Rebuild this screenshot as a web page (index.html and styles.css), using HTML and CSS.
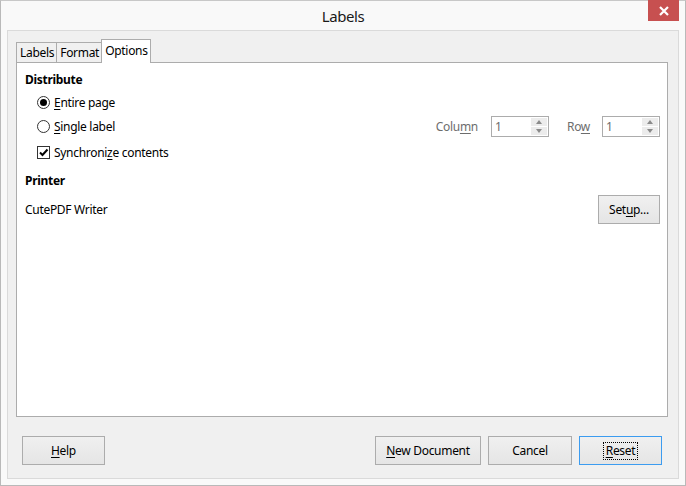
FILE: index.html
```html
<!DOCTYPE html>
<html>
<head>
<meta charset="utf-8">
<link rel="stylesheet" href="styles.css">
</head>
<body>
<div class="window">
  <div class="titlebar">
    <div class="title">Labels</div>
    <div class="close"><svg width="10" height="10" viewBox="0 0 10 10"><path d="M1 1 L9 9 M9 1 L1 9" stroke="#fff" stroke-width="2.2"/></svg></div>
  </div>
  <div class="client">
    <div class="tabs">
      <div class="tab">Labels</div>
      <div class="tab">Format</div>
      <div class="tab active">Options</div>
    </div>
    <div class="panel">
      <div class="row head">Distribute</div>
      <div class="row opt r1">
        <span class="radio checked"></span><span><u>E</u>ntire page</span>
      </div>
      <div class="row opt r2">
        <span class="radio"></span><span><u>S</u>ingle label</span>
        <div class="spins">
          <span class="dis lab-col">Colu<u>m</u>n</span>
          <div class="spin"><span class="val">1</span><span class="arrows"><span class="up"></span><span class="down"></span></span></div>
          <span class="dis lab-row">Ro<u>w</u></span>
          <div class="spin"><span class="val">1</span><span class="arrows"><span class="up"></span><span class="down"></span></span></div>
        </div>
      </div>
      <div class="row opt r3">
        <span class="check"><svg width="11" height="11" viewBox="0 0 11 11"><path d="M2 5.5 L4.5 8 L9.5 2.5" fill="none" stroke="#000" stroke-width="2"/></svg></span><span>Synchroni<u>z</u>e contents</span>
      </div>
      <div class="row head h2">Printer</div>
      <div class="row printer">
        <span>CutePDF Writer</span>
        <button class="btn setup">Set<u>u</u>p...</button>
      </div>
    </div>
    <div class="buttons">
      <button class="btn help"><u>H</u>elp</button>
      <div class="spacer"></div>
      <button class="btn newdoc"><u>N</u>ew Document</button>
      <button class="btn cancel">Cancel</button>
      <button class="btn reset default"><span class="focus"><u>R</u>eset</span></button>
    </div>
  </div>
</div>
</body>
</html>
```
FILE: styles.css
```css
* { box-sizing: border-box; }
html, body { margin: 0; padding: 0; }
body {
  width: 686px; height: 486px; overflow: hidden;
  font-family: "Noto Sans", "Open Sans", sans-serif;
  font-size: 12px; color: #000; background: #fff;
  letter-spacing: -0.3px;
}
u { text-decoration: underline; text-underline-offset: 2px; }
.window {
  width: 686px; height: 486px;
  border: 1px solid #b9b9b9; border-top-color: #c8c8c8;
  background: #f9f9f9;
  display: flex; flex-direction: column;
}
.titlebar {
  height: 29px; position: relative;
  display: flex; align-items: center; justify-content: center;
}
.title { font-size: 15px; color: #1a1a1a; margin-top: 1px; letter-spacing: -0.4px; }
.close {
  position: absolute; right: 6px; top: -1px;
  width: 31px; height: 21px; background: #c75050;
  display: flex; align-items: center; justify-content: center;
}
.client {
  margin: 0 6px 0 6px;
  height: 449px;
  border: 1px solid #dadada;
  background: #f0f0f0;
  padding: 8px 10px 0 8px;
  display: flex; flex-direction: column;
}
.tabs { display: flex; height: 23px; align-items: flex-end; position: relative; z-index: 1; }
.tab {
  height: 20px; padding: 0 2px 0 3px;
  border: 1px solid #acacac; border-bottom: none;
  background: #f0f0f0;
  line-height: 19px;
  margin-left: -1px;
}
.tab:first-child { margin-left: 0; }
.tab.active {
  height: 24px; background: #fff; padding: 0 2px 0 3px;
  margin-bottom: -1px; line-height: 22px;
}
.panel {
  height: 355px;
  background: #fff;
  border: 1px solid #acacac;
  padding: 4px 7px 0 8px;
  display: flex; flex-direction: column;
}
.row { display: flex; align-items: center; }
.head { font-weight: bold; height: 25px; }
.opt { height: 25px; padding-left: 12px; }
.r1 { height: 20px; }
.r2 { height: 28px; }
.r3 { height: 24px; }
.h2 { height: 28px; padding-top: 5px; }
.radio {
  width: 13px; height: 13px; border-radius: 50%;
  border: 1px solid #333; background: #fff;
  margin-right: 4px; position: relative; flex: none;
}
.radio.checked::after {
  content: ""; position: absolute; left: 2px; top: 2px;
  width: 7px; height: 7px; border-radius: 50%; background: #000;
}
.check {
  width: 13px; height: 13px; border: 1px solid #333; background: #fff;
  margin-right: 4px; display: flex; align-items: center; justify-content: center; flex: none;
}
.spins { margin-left: auto; display: flex; align-items: center; }
.dis { color: #6d6d6d; }
.lab-col { margin-right: 13px; }
.lab-row { margin-left: 18px; margin-right: 12px; }
.spin {
  width: 58px; height: 21px; border: 1px solid #acacac; background: #fff;
  display: flex; align-items: center; justify-content: space-between;
  padding: 1px 1px 1px 3px;
}
.val { color: #6d6d6d; }
.arrows {
  width: 16px; height: 17px; display: flex; flex-direction: column; gap: 1px;
}
.arrows span {
  flex: 1; background: #ececec; position: relative;
}
.arrows .up::after, .arrows .down::after {
  content: ""; position: absolute; left: 5px; width: 0; height: 0;
  border-left: 3px solid transparent; border-right: 3px solid transparent;
}
.arrows .up::after { top: 2px; border-bottom: 4px solid #8a8a8a; }
.arrows .down::after { top: 2px; border-top: 4px solid #8a8a8a; }
.printer { height: 32px; justify-content: space-between; padding-top: 3px; }
.btn {
  font-family: inherit; font-size: 12px; color: #000; letter-spacing: -0.3px;
  border: 1px solid #acacac; border-radius: 0;
  background: linear-gradient(#f0f0f0, #e5e5e5);
  padding: 0; margin: 0;
  display: flex; align-items: center; justify-content: center;
}
.setup { width: 62px; height: 29px; }
.buttons {
  display: flex; align-items: center;
  padding: 19px 6px 0 6px; height: 48px;
  gap: 7px;
}
.spacer { flex: 1; }
.buttons .btn { height: 29px; flex: none; }
.help { width: 83px; }
.newdoc { width: 106px; }
.cancel { width: 84px; }
.reset { width: 83px; }
.default { border-color: #3c9cf0; }
.focus { outline: 1px dotted #000; outline-offset: 1px; padding: 0 1px; line-height: 14px; }
```
